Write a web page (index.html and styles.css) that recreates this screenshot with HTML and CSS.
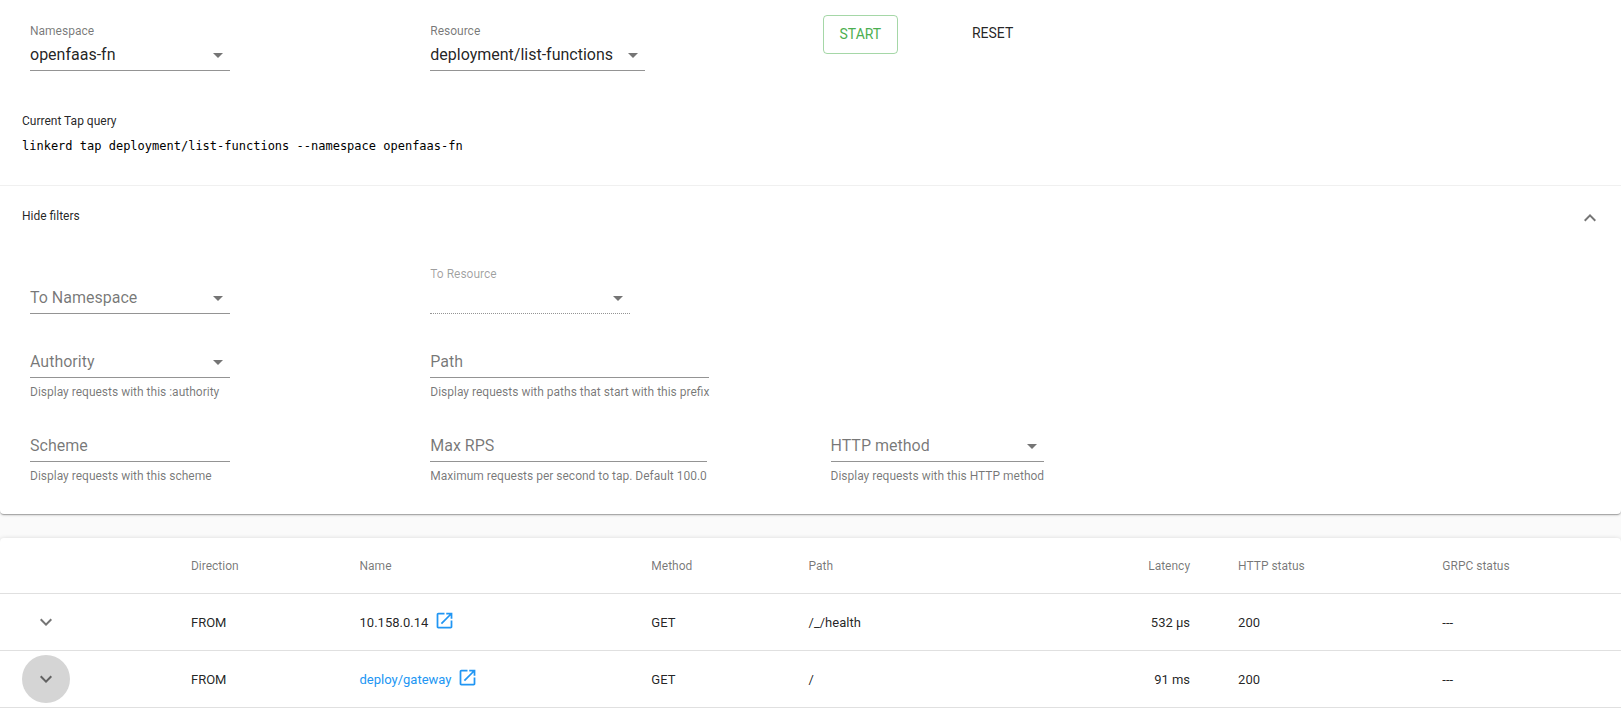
FILE: index.html
```html
<!DOCTYPE html>
<html lang="en">
<head>
<meta charset="utf-8">
<meta name="viewport" content="width=device-width, initial-scale=1">
<title>Tap</title>
<link rel="stylesheet" href="styles.css">
</head>
<body>
<svg class="sprite" aria-hidden="true">
  <symbol id="drop" viewBox="0 0 24 24"><path d="M7 10l5 5 5-5z"/></symbol>
  <symbol id="more" viewBox="0 0 24 24"><path d="M16.59 8.59L12 13.17 7.41 8.59 6 10l6 6 6-6z"/></symbol>
  <symbol id="less" viewBox="0 0 24 24"><path d="M12 8l-6 6 1.41 1.41L12 10.83l4.59 4.58L18 14z"/></symbol>
  <symbol id="open" viewBox="0 0 24 24"><path d="M19 19H5V5h7V3H5c-1.11 0-2 .9-2 2v14c0 1.1.89 2 2 2h14c1.1 0 2-.9 2-2v-7h-2v7zM14 3v2h3.59l-9.83 9.83 1.41 1.41L19 6.41V10h2V3h-7z"/></symbol>
</svg>
<main class="page">
  <section class="card">
    <form class="toolbar">
      <div class="field filled">
        <label for="ns">Namespace</label>
        <select id="ns"><option>openfaas-fn</option></select>
        <svg class="caret"><use href="#drop"/></svg>
      </div>
      <div class="field filled">
        <label for="res">Resource</label>
        <select id="res"><option>deployment/list-functions</option></select>
        <svg class="caret"><use href="#drop"/></svg>
      </div>
      <button type="button" class="btn btn-start">START</button>
      <button type="button" class="btn">RESET</button>
    </form>
    <div class="query">
      <div class="caption">Current Tap query</div>
      <code>linkerd tap deployment/list-functions --namespace openfaas-fn</code>
    </div>
    <button type="button" class="expander" aria-expanded="true" aria-controls="filters">
      <span class="caption">Hide filters</span>
      <svg class="icon"><use href="#less"/></svg>
    </button>
    <form class="filters" id="filters">
      <div class="field">
        <label for="to-ns">To Namespace</label>
        <select id="to-ns"><option></option></select>
        <svg class="caret"><use href="#drop"/></svg>
      </div>
      <div class="field filled disabled">
        <label for="to-res">To Resource</label>
        <select id="to-res" disabled><option></option></select>
        <svg class="caret"><use href="#drop"/></svg>
      </div>
      <div class="field row-start">
        <label for="authority">Authority</label>
        <select id="authority"><option></option></select>
        <svg class="caret"><use href="#drop"/></svg>
        <p>Display requests with this :authority</p>
      </div>
      <div class="field">
        <label for="path">Path</label>
        <input id="path" type="text">
        <p>Display requests with paths that start with this prefix</p>
      </div>
      <div class="field row-start">
        <label for="scheme">Scheme</label>
        <input id="scheme" type="text">
        <p>Display requests with this scheme</p>
      </div>
      <div class="field">
        <label for="rps">Max RPS</label>
        <input id="rps" type="text">
        <p>Maximum requests per second to tap. Default 100.0</p>
      </div>
      <div class="field">
        <label for="method">HTTP method</label>
        <select id="method"><option></option></select>
        <svg class="caret"><use href="#drop"/></svg>
        <p>Display requests with this HTTP method</p>
      </div>
    </form>
  </section>
  <section class="card card-table">
    <table>
      <colgroup>
        <col class="c-expand"><col class="c-direction"><col class="c-name"><col class="c-method"><col class="c-path"><col class="c-latency"><col class="c-http"><col class="c-grpc">
      </colgroup>
      <thead>
        <tr><th></th><th>Direction</th><th>Name</th><th>Method</th><th>Path</th><th class="num">Latency</th><th>HTTP status</th><th>GRPC status</th></tr>
      </thead>
      <tbody>
        <tr>
          <td class="expand"><button type="button" class="round" aria-label="Expand row"><svg class="icon"><use href="#more"/></svg></button></td>
          <td>FROM</td>
          <td><span class="name">10.158.0.14 <a href="#" aria-label="Open 10.158.0.14"><svg class="open"><use href="#open"/></svg></a></span></td>
          <td>GET</td><td>/_/health</td><td class="num">532 µs</td><td>200</td><td>---</td>
        </tr>
        <tr>
          <td class="expand"><button type="button" class="round active" aria-label="Expand row"><svg class="icon"><use href="#more"/></svg></button></td>
          <td>FROM</td>
          <td><span class="name"><a href="#">deploy/gateway</a> <a href="#" aria-label="Open deploy/gateway"><svg class="open"><use href="#open"/></svg></a></span></td>
          <td>GET</td><td>/</td><td class="num">91 ms</td><td>200</td><td>---</td>
        </tr>
      </tbody>
    </table>
  </section>
</main>
</body>
</html>
```
FILE: styles.css
```css
* { box-sizing: border-box; }

body {
  margin: 0;
  background: #fafafa;
  color: rgba(0, 0, 0, 0.87);
  font-family: Roboto, "Liberation Sans", sans-serif;
  font-size: 16px;
}

.sprite { display: none; }

.page {
  display: flex;
  flex-direction: column;
  gap: 24px;
  min-height: 100vh;
}

.card {
  background: #fff;
  border-radius: 0 0 4px 4px;
  box-shadow: 0 1px 3px rgba(0, 0, 0, 0.2), 0 1px 1px rgba(0, 0, 0, 0.14), 0 2px 1px -1px rgba(0, 0, 0, 0.12);
}

.card-table {
  flex: 1;
  border-radius: 4px 4px 0 0;
  box-shadow: 0 1px 5px rgba(0, 0, 0, 0.2), 0 2px 2px rgba(0, 0, 0, 0.14), 0 3px 1px -2px rgba(0, 0, 0, 0.12);
}

.toolbar,
.filters {
  display: grid;
  grid-template-columns: repeat(12, minmax(0, 1fr));
  column-gap: 24px;
  align-items: start;
  justify-items: start;
}

.toolbar { padding: 15px 22px 40px; }

.filters {
  row-gap: 16px;
  padding: 16px 22px 32px;
}

.field {
  grid-column: span 3;
  display: inline-grid;
  grid-template-rows: 16px 32px;
  min-width: 200px;
  margin-left: 8px;
  color: rgba(0, 0, 0, 0.54);
}

.toolbar .field { margin-top: 8px; }

.row-start { grid-column: 1 / span 3; }

.field label {
  grid-area: 2 / 1;
  z-index: 1;
  line-height: 32px;
  pointer-events: none;
}

.field.filled label {
  grid-area: 1 / 1;
  font-size: 12px;
  line-height: 16px;
}

.field.disabled label { color: rgba(0, 0, 0, 0.38); }

.field select,
.field input {
  grid-area: 2 / 1;
  width: 100%;
  min-width: 0;
  height: 32px;
  margin: 0;
  padding: 0;
  border: 0;
  border-bottom: 1px solid #949494;
  border-radius: 0;
  outline: 0;
  appearance: none;
  background: none;
  color: rgba(0, 0, 0, 0.87);
  font: inherit;
}

.field input {
  width: 0;
  min-width: 100%;
}

.field select {
  padding-right: 32px;
  opacity: 1;
}

.field.disabled select { border-bottom-style: dotted; }

.caret {
  grid-area: 2 / 1;
  align-self: start;
  justify-self: end;
  width: 24px;
  height: 24px;
  margin-top: 4px;
  fill: #757575;
  pointer-events: none;
}

.field p {
  grid-area: 3 / 1;
  margin: 8px 0 0;
  font-size: 12px;
  line-height: 12px;
  white-space: nowrap;
}

.btn {
  padding: 8px 16px;
  border: 0;
  border-radius: 4px;
  background: none;
  color: rgba(0, 0, 0, 0.87);
  font: 14px/21px Roboto, "Liberation Sans", sans-serif;
}

.btn-start {
  border: 1px solid rgba(76, 175, 80, 0.5);
  color: #4caf50;
}

.query {
  padding: 0 22px 29px;
  font-size: 12px;
  line-height: 20px;
}

.query code {
  display: block;
  margin-top: 5px;
  color: #000;
  font-family: "DejaVu Sans Mono", monospace;
}

.caption {
  font-size: 12px;
  line-height: 20px;
}

.expander {
  display: flex;
  align-items: center;
  justify-content: space-between;
  width: 100%;
  height: 65px;
  padding: 0 19px 0 22px;
  border: 0;
  border-top: 1px solid #f0f0f0;
  background: none;
  color: inherit;
  font: inherit;
}

.expander .caption { padding-bottom: 4px; }

.icon {
  display: block;
  width: 24px;
  height: 24px;
  fill: #757575;
}

table {
  width: 100%;
  table-layout: fixed;
  border-collapse: separate;
  border-spacing: 0;
  font-size: 13px;
}

.c-expand { width: 10.3%; }
.c-direction { width: 10.4%; }
.c-name { width: 18%; }
.c-method { width: 9.7%; }
.c-path { width: 18.5%; }
.c-latency { width: 8%; }
.c-http { width: 12.6%; }
.c-grpc { width: 12.5%; }

th,
td {
  height: 57px;
  padding: 0 24px;
  border-bottom: 1px solid #e0e0e0;
  text-align: left;
  white-space: nowrap;
}

th {
  height: 56px;
  color: rgba(0, 0, 0, 0.54);
  font-size: 12px;
  font-weight: 400;
}

.num { text-align: right; }

.expand { padding: 0 22px; }

.round {
  display: block;
  width: 48px;
  height: 48px;
  padding: 12px;
  border: 0;
  border-radius: 50%;
  background: none;
}

.round.active { background: #d5d5d5; }

.round.active .icon { fill: #626262; }

.name {
  display: flex;
  align-items: center;
  gap: 6px;
}

a {
  color: #2196f3;
  text-decoration: none;
}

.open {
  display: block;
  width: 21px;
  height: 21px;
  margin-bottom: 3px;
  fill: currentColor;
}
```
